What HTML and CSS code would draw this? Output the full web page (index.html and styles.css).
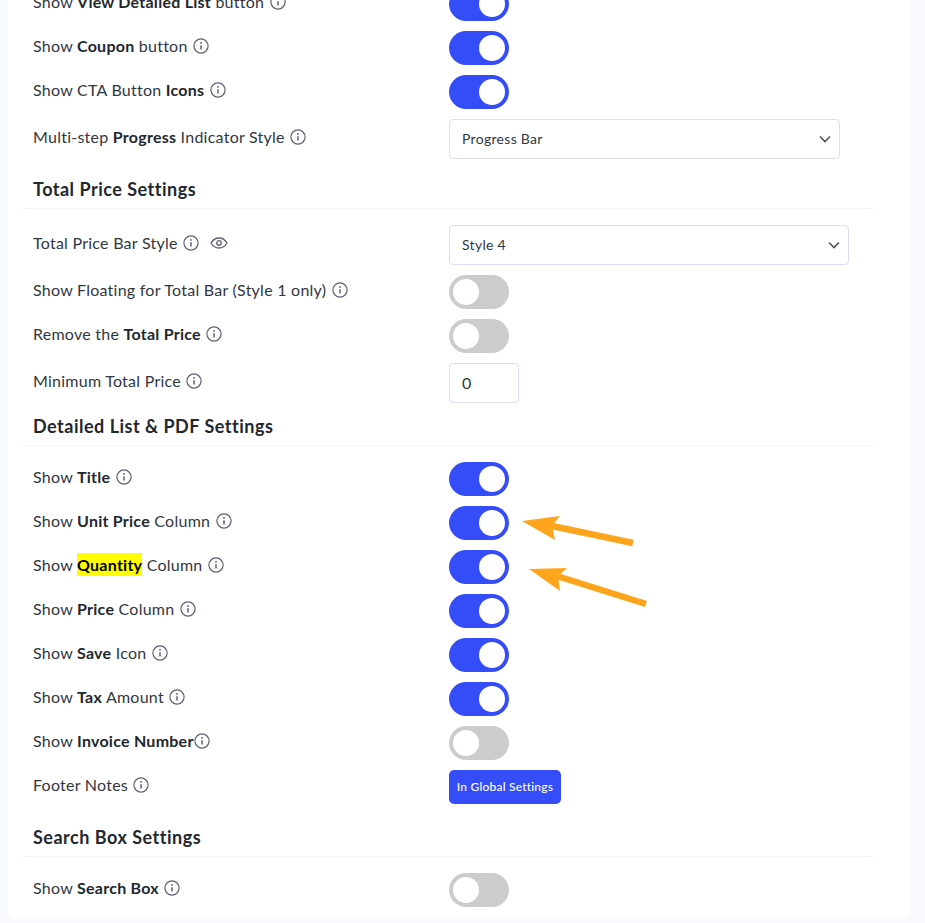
FILE: index.html
```html
<!DOCTYPE html>
<html lang="en">
<head>
  <meta charset="UTF-8" />
  <meta name="viewport" content="width=device-width, initial-scale=1.0"/>
  <title>Calculator Settings</title>
  <link rel="stylesheet" href="styles.css">
</head>
<body>
  <svg width="0" height="0" class="defs">
    <symbol id="info" viewBox="0 0 16 16">
      <circle cx="8" cy="8" r="7.1" fill="none" stroke="currentColor" stroke-width="1.2"/>
      <circle cx="8" cy="4.9" r="0.95" fill="currentColor"/>
      <path d="M8 7.2v4.4" fill="none" stroke="currentColor" stroke-width="1.5"/>
    </symbol>
  </svg>

  <div class="card">
    <div class="row row-first">
      <div class="label">Show <b>View Detailed List</b> button <svg class="info"><use href="#info"/></svg></div>
      <label class="switch"><input type="checkbox" checked><span class="slider"></span></label>
    </div>
    <div class="row">
      <div class="label">Show <b>Coupon</b> button <svg class="info"><use href="#info"/></svg></div>
      <label class="switch"><input type="checkbox" checked><span class="slider"></span></label>
    </div>
    <div class="row">
      <div class="label">Show CTA Button <b>Icons</b> <svg class="info"><use href="#info"/></svg></div>
      <label class="switch"><input type="checkbox" checked><span class="slider"></span></label>
    </div>
    <div class="row">
      <div class="label">Multi-step <b>Progress</b> Indicator Style <svg class="info"><use href="#info"/></svg></div>
      <select class="select select-narrow"><option>Progress Bar</option></select>
    </div>

    <h2 class="section section-a">Total Price Settings</h2>
    <div class="row">
      <div class="label">Total Price Bar Style <svg class="info"><use href="#info"/></svg>
        <svg class="eye" viewBox="0 0 18 12"><path d="M1 6c2-3.300 4.700-5 8-5s6 1.700 8 5c-2 3.300-4.700 5-8 5s-6-1.700-8-5z" fill="none" stroke="currentColor" stroke-width="1.300"/><circle cx="9" cy="6" r="2.300" fill="none" stroke="currentColor" stroke-width="1.300"/></svg>
      </div>
      <select class="select"><option>Style 4</option></select>
    </div>
    <div class="row">
      <div class="label">Show Floating for Total Bar (Style 1 only) <svg class="info"><use href="#info"/></svg></div>
      <label class="switch"><input type="checkbox"><span class="slider"></span></label>
    </div>
    <div class="row">
      <div class="label">Remove the <b>Total Price</b> <svg class="info"><use href="#info"/></svg></div>
      <label class="switch"><input type="checkbox"><span class="slider"></span></label>
    </div>
    <div class="row">
      <div class="label">Minimum Total Price <svg class="info"><use href="#info"/></svg></div>
      <input class="number" type="text" value="0">
    </div>

    <h2 class="section section-b">Detailed List &amp; PDF Settings</h2>
    <div class="row">
      <div class="label">Show <b>Title</b> <svg class="info"><use href="#info"/></svg></div>
      <label class="switch"><input type="checkbox" checked><span class="slider"></span></label>
    </div>
    <div class="row">
      <div class="label">Show <b>Unit Price</b> Column <svg class="info"><use href="#info"/></svg></div>
      <label class="switch"><input type="checkbox" checked><span class="slider"></span></label>
    </div>
    <div class="row">
      <div class="label">Show <b class="mark">Quantity</b> Column <svg class="info"><use href="#info"/></svg></div>
      <label class="switch"><input type="checkbox" checked><span class="slider"></span></label>
    </div>
    <div class="row">
      <div class="label">Show <b>Price</b> Column <svg class="info"><use href="#info"/></svg></div>
      <label class="switch"><input type="checkbox" checked><span class="slider"></span></label>
    </div>
    <div class="row">
      <div class="label">Show <b>Save</b> Icon <svg class="info"><use href="#info"/></svg></div>
      <label class="switch"><input type="checkbox" checked><span class="slider"></span></label>
    </div>
    <div class="row">
      <div class="label">Show <b>Tax</b> Amount <svg class="info"><use href="#info"/></svg></div>
      <label class="switch"><input type="checkbox" checked><span class="slider"></span></label>
    </div>
    <div class="row">
      <div class="label">Show <b>Invoice Number</b><svg class="info info-tight"><use href="#info"/></svg></div>
      <label class="switch"><input type="checkbox"><span class="slider"></span></label>
    </div>
    <div class="row">
      <div class="label">Footer Notes <svg class="info"><use href="#info"/></svg></div>
      <button class="btn">In Global Settings</button>
    </div>

    <h2 class="section section-c">Search Box Settings</h2>
    <div class="row row-last">
      <div class="label">Show <b>Search Box</b> <svg class="info"><use href="#info"/></svg></div>
      <label class="switch"><input type="checkbox"><span class="slider"></span></label>
    </div>
  </div>

  <!-- annotation arrows drawn over the screenshot -->
  <svg class="arrows" width="925" height="923" viewBox="0 0 925 923">
    <path d="M633 543 L552 526" stroke="#ffa51d" stroke-width="6.500" fill="none"/>
    <polygon points="522,521 560,516 552,526 555,540" fill="#ffa51d"/>
    <path d="M646 604 L557 576" stroke="#ffa51d" stroke-width="6.500" fill="none"/>
    <polygon points="529,569 567,568 558,576 560,591" fill="#ffa51d"/>
  </svg>
</body>
</html>
```

FILE: styles.css
```css
* {
  box-sizing: border-box;
}

html, body {
  height: 923px;
  overflow: hidden;
}

body {
  margin: 0;
  padding: 0 14px 0 8px;
  font-family: Lato, 'Open Sans', sans-serif;
  font-size: 16px;
  letter-spacing: 0.25px;
  color: #32373f;
  background: #f8f9ff;
}

.defs {
  position: absolute;
}

.card {
  height: 919px;
  padding: 0 0 0 25px;
  background: #fff;
  border-radius: 0 0 8px 8px;
  overflow: hidden;
}

.row {
  display: flex;
  align-items: center;
  margin-bottom: 10px;
}

.row-first {
  margin-top: -13px;
}

.row-last {
  margin-bottom: 0;
}

.label {
  flex: 0 0 416px;
  line-height: 20px;
  margin-top: -4px;
  white-space: nowrap;
}

.label b {
  font-weight: 700;
  color: #23272e;
}

.label .mark {
  padding: 2px 0;
  background: #ffff00;
  color: #000;
}

.info {
  width: 16px;
  height: 16px;
  margin-left: 1px;
  vertical-align: -2px;
  color: #5d6174;
}

.info-tight {
  margin-left: 0;
}

.eye {
  width: 18px;
  height: 12px;
  margin-left: 7px;
  color: #5d6174;
}

.section {
  height: 30px;
  margin: 0 35px 16px -12px;
  padding: 0 0 0 12px;
  font-size: 18px;
  letter-spacing: 0.5px;
  line-height: 20px;
  font-weight: 700;
  color: #23272e;
  border-bottom: 1px solid #f4f4fc;
}

.section-a {
  margin-top: 20px;
}

.section-b {
  margin-top: 13px;
}

.section-c {
  margin-top: 23px;
}

.switch {
  display: block;
  width: 60px;
  height: 34px;
}

.switch input {
  display: none;
}

.slider {
  display: block;
  position: relative;
  height: 34px;
  border-radius: 34px;
  background: #ccc;
}

.slider::before {
  content: "";
  position: absolute;
  top: 4px;
  left: 4px;
  width: 26px;
  height: 26px;
  border-radius: 50%;
  background: #fff;
}

.switch input:checked + .slider {
  background: #344df8;
}

.switch input:checked + .slider::before {
  left: 30px;
}

.select {
  appearance: none;
  width: 400px;
  height: 40px;
  padding: 0 12px 2px 12px;
  font: inherit;
  font-size: 14px;
  letter-spacing: 0.3px;
  color: #32373f;
  background: #fff url("data:image/svg+xml,%3Csvg xmlns='http://www.w3.org/2000/svg' width='12' height='8' viewBox='0 0 12 8'%3E%3Cpath d='M1 1.500l5 5 5-5' fill='none' stroke='%23555' stroke-width='1.600'/%3E%3C/svg%3E") no-repeat right 8px center;
  border: 1px solid #dedcf8;
  border-radius: 4px;
}

.select-narrow {
  width: 391px;
}

.number {
  width: 70px;
  height: 40px;
  padding: 0 12px 2px 12px;
  font: inherit;
  color: #32373f;
  background: #fff;
  border: 1px solid #dedcf8;
  border-radius: 4px;
}

.btn {
  width: 112px;
  height: 34px;
  padding: 0 0 2px;
  font: inherit;
  font-size: 12px;
  letter-spacing: 0.2px;
  font-weight: 500;
  color: #fff;
  background: #344df8;
  border: none;
  border-radius: 5px;
}

.arrows {
  position: absolute;
  top: 0;
  left: 0;
  pointer-events: none;
}
```
